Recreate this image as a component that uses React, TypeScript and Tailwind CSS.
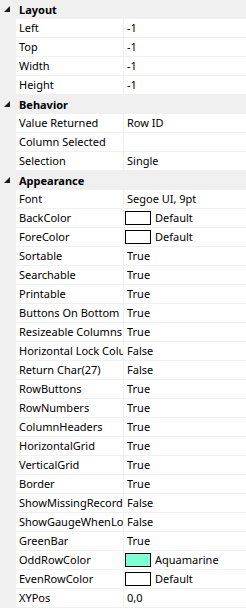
import React from 'react';

type Prop = {
  name: string;
  value?: string;
  swatch?: string;
};

type Group = {
  title: string;
  props: Prop[];
};

const groups: Group[] = [
  {
    title: 'Layout',
    props: [
      { name: 'Left', value: '-1' },
      { name: 'Top', value: '-1' },
      { name: 'Width', value: '-1' },
      { name: 'Height', value: '-1' },
    ],
  },
  {
    title: 'Behavior',
    props: [
      { name: 'Value Returned', value: 'Row ID' },
      { name: 'Column Selected', value: '' },
      { name: 'Selection', value: 'Single' },
    ],
  },
  {
    title: 'Appearance',
    props: [
      { name: 'Font', value: 'Segoe UI, 9pt' },
      { name: 'BackColor', value: 'Default', swatch: '#ffffff' },
      { name: 'ForeColor', value: 'Default', swatch: '#ffffff' },
      { name: 'Sortable', value: 'True' },
      { name: 'Searchable', value: 'True' },
      { name: 'Printable', value: 'True' },
      { name: 'Buttons On Bottom', value: 'True' },
      { name: 'Resizeable Columns', value: 'True' },
      { name: 'Horizontal Lock Columns', value: 'False' },
      { name: 'Return Char(27)', value: 'False' },
      { name: 'RowButtons', value: 'True' },
      { name: 'RowNumbers', value: 'True' },
      { name: 'ColumnHeaders', value: 'True' },
      { name: 'HorizontalGrid', value: 'True' },
      { name: 'VerticalGrid', value: 'True' },
      { name: 'Border', value: 'True' },
      { name: 'ShowMissingRecords', value: 'False' },
      { name: 'ShowGaugeWhenLoading', value: 'False' },
      { name: 'GreenBar', value: 'True' },
      { name: 'OddRowColor', value: 'Aquamarine', swatch: '#7fffd4' },
      { name: 'EvenRowColor', value: 'Default', swatch: '#ffffff' },
      { name: 'XYPos', value: '0,0' },
    ],
  },
];

const Arrow: React.FC = () => (
  <svg width="6" height="6" viewBox="0 0 6 6" className="ml-[4px] mt-[6px]">
    <polygon points="6,0 6,6 0,6" fill="#1a1a1a" />
  </svg>
);

const App: React.FC = () => {
  return (
    <div
      className="w-[246px] h-[616px] bg-white text-[11px] text-black overflow-hidden"
      style={{ fontFamily: '"Noto Sans", "Open Sans", sans-serif' }}
    >
      {groups.map((group) => (
        <div key={group.title}>
          {/* Category header */}
          <div className="flex h-[19px] bg-[#f0f0f0]">
            <div className="w-4 flex-shrink-0">
              <Arrow />
            </div>
            <div className="pl-[3px] leading-[19px] font-bold">{group.title}</div>
          </div>

          {group.props.map((prop) => (
            <div key={prop.name} className="flex h-[19px]">
              <div className="w-4 flex-shrink-0 bg-[#f0f0f0]" />
              <div className="flex flex-1 min-w-0 border-b border-[#f0f0f0]">
                <div className="w-[108px] flex-shrink-0 border-r border-[#f0f0f0] pl-[3px] leading-[18px] whitespace-nowrap overflow-hidden">
                  {prop.name}
                </div>
                <div className="flex flex-1 min-w-0 items-center pl-[1px] whitespace-nowrap overflow-hidden">
                  {prop.swatch ? (
                    <>
                      <span
                        className="w-[26px] h-[14px] border border-black flex-shrink-0"
                        style={{ backgroundColor: prop.swatch }}
                      />
                      <span className="pl-[4px] leading-[18px]">{prop.value}</span>
                    </>
                  ) : (
                    <span className="pl-[2px] leading-[18px]">{prop.value}</span>
                  )}
                </div>
              </div>
            </div>
          ))}
        </div>
      ))}
    </div>
  );
};

export default App;
